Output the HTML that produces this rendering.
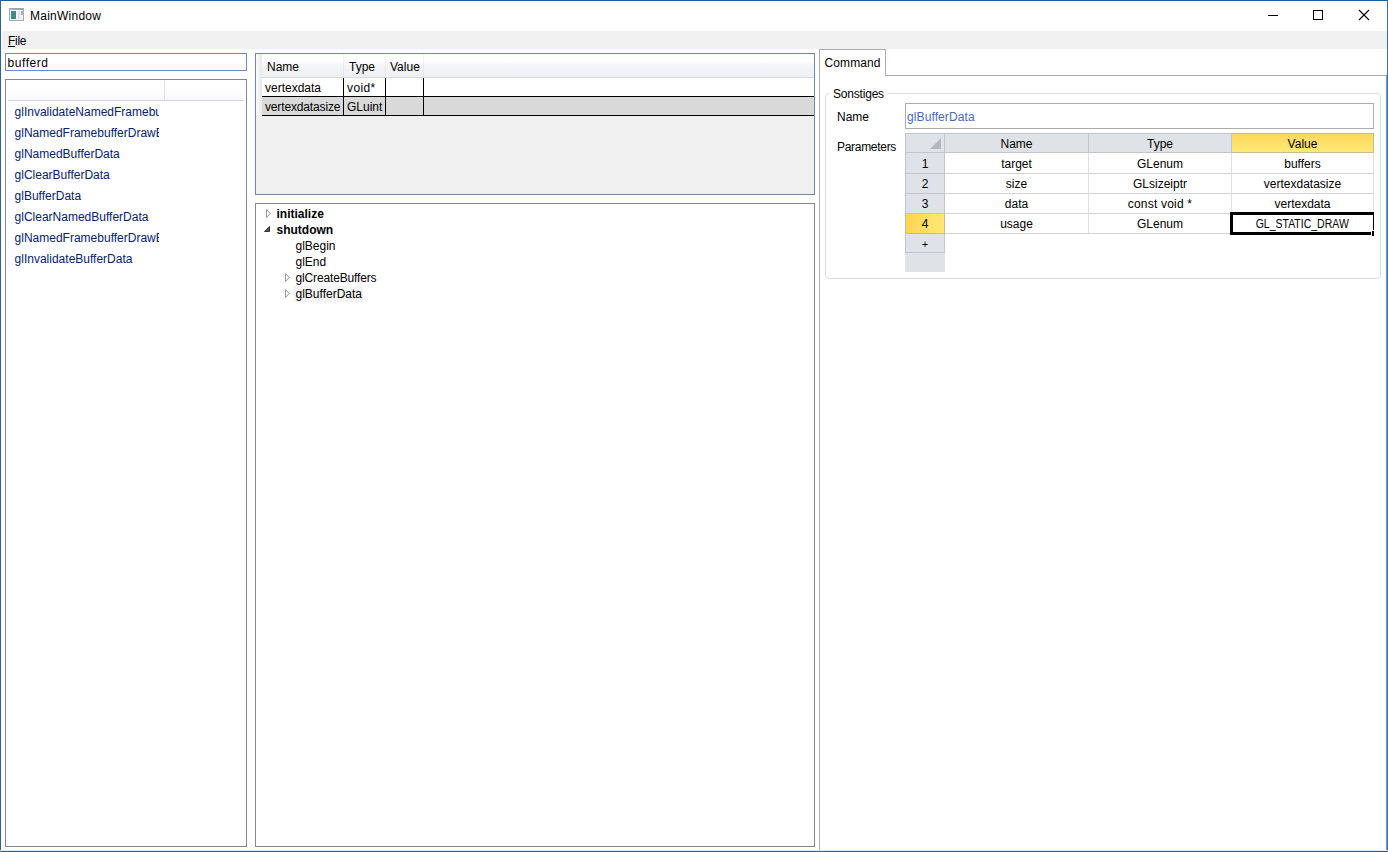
<!DOCTYPE html>
<html><head><meta charset="utf-8"><title>MainWindow</title>
<style>
*{box-sizing:border-box;margin:0;padding:0}
html,body{width:1388px;height:852px;overflow:hidden;background:#fff}
body{font-family:"Liberation Sans",sans-serif;font-size:12px;color:#000;position:relative}
.abs{position:absolute}
.t{position:absolute;white-space:nowrap;line-height:16px;height:16px}
#win{position:absolute;left:0;top:0;width:1388px;height:852px}
#menubar{left:2px;top:31px;width:1385px;height:18px;background:#f0f0f0}
/* left */
#search{left:5px;top:53px;width:242px;height:18px;border:1px solid #6a8cc4;background:#fff}
#list{left:5px;top:79px;width:242px;height:768px;border:1px solid #85878c;background:#fff}
#list .li{color:#042271;left:8.6px}
/* middle */
#dg{left:255px;top:53px;width:560px;height:142px;border:1px solid #7089a3;background:#f0f0f0}
#tree{left:255px;top:203px;width:560px;height:644px;border:1px solid #85878c;background:#fff}
/* right */
#tabc{left:819px;top:75px;width:568px;height:776px;border:1px solid #acacac;border-bottom:none;border-right:none;background:#fff}
#tab{left:819px;top:49px;width:67px;height:27px;border:1px solid #acacac;border-bottom:none;background:#fff}
#gb{left:825px;top:93px;width:556px;height:186px;border:1px solid #dcdcdc;border-radius:4px}
#nametb{left:905px;top:103px;width:469px;height:26px;border:1px solid #ababab;background:#fff}

#win{z-index:50;pointer-events:none}
#win i{position:absolute;display:block}
/* list header */
#lhead{background:linear-gradient(#fff 0,#fff 50%,#f7f8fa 100%);border-bottom:1px solid #d5d5d5}
/* datagrid */
#dg .hd{position:absolute;top:0;height:24px;background:linear-gradient(#fff 0,#fff 30%,#f4f5f7 50%,#eef0f3 100%);border-bottom:1px solid #d8dade}
#dg .vs{position:absolute;top:0;width:1px;height:23px;background:linear-gradient(#f4f5f7,#dfe2e6)}
#dg .row{position:absolute;left:6px;width:552px;height:19px;border-bottom:1px solid #000}
#dg .vl{position:absolute;top:24px;width:1px;height:38px;background:#000}
/* tree */
#tree .n{font-weight:bold}
/* grid right */
#pg{left:905px;top:133px;width:470px;height:140px}
#pg .h{position:absolute;top:0;height:20px;border:1px solid #c2c6cc;border-left:none;background:#dfe3e8;text-align:center;line-height:18px;padding-top:1px}
#pg .rh{position:absolute;left:0;width:40px;height:20px;border:1px solid #c2c6cc;border-top:none;background:#dfe3e8;text-align:center;line-height:19px;padding-top:1px}
#pg .c{position:absolute;height:20px;border-right:1px solid #e0e0e0;border-bottom:1px solid #d2d2d2;text-align:center;line-height:19px;padding-top:1px;background:#fff;white-space:nowrap}
</style></head><body>

<!-- window icon -->
<div class="abs" style="left:9px;top:8px;width:15px;height:13px;border:1px solid #a6acb4;border-top-color:#9ca6b3;background:#f3f4f6">
 <div class="abs" style="left:0;top:0;width:13px;height:1px;background:linear-gradient(90deg,#b4bcc6,#8c99aa)"></div>
 <div class="abs" style="left:1px;top:2px;width:5px;height:8px;background:linear-gradient(#4d7c9b,#3f8f8a 50%,#3c8a6c)"></div>
 <div class="abs" style="left:8px;top:2px;width:2px;height:8px;background:#dfe0e4"></div>
 <div class="abs" style="left:11px;top:2px;width:2px;height:4px;background:#aeb0b5"></div>
</div>
<!-- caption buttons -->
<svg class="abs" style="left:1260px;top:4px" width="120" height="24" viewBox="0 0 120 24">
 <rect x="8" y="11" width="10" height="1" fill="#000"/>
 <rect x="53.5" y="6.5" width="9" height="9" fill="none" stroke="#000" stroke-width="1"/>
 <path d="M99 6 L109 16 M109 6 L99 16" stroke="#000" stroke-width="1.1" fill="none"/>
</svg>
<!-- title bar -->
<div class="t" style="left:30px;top:8px;letter-spacing:.25px">MainWindow</div>
<div id="menubar" class="abs"></div>
<div class="t" style="left:8px;top:33px;letter-spacing:-.3px"><u>F</u>ile</div>

<!-- left column -->
<div id="search" class="abs"><div class="t" style="left:1.6px;top:1px;letter-spacing:.55px">bufferd</div></div>
<div id="list" class="abs">
 <div class="abs" id="lhead" style="left:2px;top:0;width:236px;height:21px"><div class="abs" style="left:156px;top:0;width:1px;height:20px;background:#e2e3e6"></div></div>
 <div class="abs" id="lclip" style="left:0;top:21px;width:153px;height:740px;overflow:hidden">
 <div class="t li" style="top:3px">glInvalidateNamedFramebufferData</div>
 <div class="t li" style="top:24px">glNamedFramebufferDrawBuffer</div>
 <div class="t li" style="top:45px">glNamedBufferData</div>
 <div class="t li" style="top:66px">glClearBufferData</div>
 <div class="t li" style="top:87px">glBufferData</div>
 <div class="t li" style="top:108px">glClearNamedBufferData</div>
 <div class="t li" style="top:129px">glNamedFramebufferDrawBuffers</div>
 <div class="t li" style="top:150px">glInvalidateBufferData</div>
 </div>
</div>

<!-- middle column -->
<div id="dg" class="abs">
 <div class="abs" style="left:0;top:0;width:6px;height:62px;background:linear-gradient(90deg,#fcfcfc,#e6e8eb)"></div>
 <div class="hd" style="left:6px;width:552px"></div>
 <div class="vs" style="left:87px"></div><div class="vs" style="left:129px"></div><div class="vs" style="left:167px"></div>
 <div class="t" style="left:11px;top:5px">Name</div>
 <div class="t" style="left:93px;top:5px">Type</div>
 <div class="t" style="left:134px;top:5px">Value</div>
 <div class="row" style="top:24px;background:#fff"></div>
 <div class="row" style="top:43px;background:#d9d9d9"></div>
 <div class="vl" style="left:87px"></div><div class="vl" style="left:129px"></div><div class="vl" style="left:167px"></div>
 <div class="t" style="left:9px;top:26px">vertexdata</div>
 <div class="t" style="left:91px;top:26px;letter-spacing:.4px">void*</div>
 <div class="t" style="left:9px;top:45px;letter-spacing:-.15px">vertexdatasize</div>
 <div class="t" style="left:91px;top:45px">GLuint</div>
</div>
<div id="tree" class="abs">
 <svg class="abs" style="left:8px;top:4px" width="40" height="100" viewBox="0 0 40 100">
  <path d="M2.5 1.5 L6.2 5.5 L2.5 9.5 Z" fill="#fff" stroke="#989898" stroke-width="1"/>
  <path d="M5.5 18.5 L5.5 23.5 L0.5 23.5 Z" fill="#595959" stroke="#333" stroke-width="1"/>
  <path d="M21.5 65.5 L25.2 69.5 L21.5 73.5 Z" fill="#fff" stroke="#989898" stroke-width="1"/>
  <path d="M21.5 81.5 L25.2 85.5 L21.5 89.5 Z" fill="#fff" stroke="#989898" stroke-width="1"/>
 </svg>
 <div class="t n" style="left:20.5px;top:2px">initialize</div>
 <div class="t n" style="left:20.5px;top:18px">shutdown</div>
 <div class="t" style="left:39.5px;top:34px">glBegin</div>
 <div class="t" style="left:39.5px;top:50px">glEnd</div>
 <div class="t" style="left:39.5px;top:66px;letter-spacing:-.15px">glCreateBuffers</div>
 <div class="abs" style="left:38px;top:82px;width:69px;height:16px;background:#f5f5f5"></div>
 <div class="t" style="left:39.5px;top:82px">glBufferData</div>
</div>

<!-- right column -->
<div id="tabc" class="abs"></div>
<div id="tab" class="abs"><div class="t" style="left:4.5px;top:5px;letter-spacing:.1px">Command</div></div>
<div id="gb" class="abs"></div>
<div class="abs" style="left:830px;top:88px;width:57px;height:12px;background:#fff"></div>
<div class="t" style="left:833px;top:86px;letter-spacing:-.2px">Sonstiges</div>
<div class="t" style="left:837px;top:109px">Name</div>
<div class="t" style="left:837px;top:139px;letter-spacing:-.3px">Parameters</div>
<div id="nametb" class="abs"><div class="t" style="left:1px;top:5px;color:#4a6ac8;letter-spacing:.1px">glBufferData</div></div>
<div id="pg" class="abs">
 <div class="abs" style="left:0;top:0;width:40px;height:139px;background:#dfe3e8"></div>
 <div class="h" style="left:0;width:40px;border-left:1px solid #c2c6cc"><svg class="abs" style="left:24px;top:4px" width="12" height="12"><path d="M11 0 L11 11 L0 11 Z" fill="#b3b7bd"/></svg></div>
 <div class="h" style="left:40px;width:144px">Name</div>
 <div class="h" style="left:184px;width:143px">Type</div>
 <div class="h" style="left:327px;width:142px;background:linear-gradient(#ffd75e,#fdea76);border-color:#c8bb90">Value</div>
 <div class="rh" style="top:20px;height:21px;line-height:20px;">1</div>
 <div class="c" style="left:40px;top:20px;width:144px;height:21px;line-height:20px">target</div>
 <div class="c" style="left:184px;top:20px;width:143px;height:21px;line-height:20px">GLenum</div>
 <div class="c" style="left:327px;top:20px;width:142px;height:21px;line-height:20px">buffers</div>
 <div class="rh" style="top:41px;height:20px;line-height:19px;">2</div>
 <div class="c" style="left:40px;top:41px;width:144px;height:20px;line-height:19px">size</div>
 <div class="c" style="left:184px;top:41px;width:143px;height:20px;line-height:19px">GLsizeiptr</div>
 <div class="c" style="left:327px;top:41px;width:142px;height:20px;line-height:19px">vertexdatasize</div>
 <div class="rh" style="top:61px;height:20px;line-height:19px;">3</div>
 <div class="c" style="left:40px;top:61px;width:144px;height:20px;line-height:19px">data</div>
 <div class="c" style="left:184px;top:61px;width:143px;height:20px;line-height:19px"><span style="letter-spacing:.2px">const void *</span></div>
 <div class="c" style="left:327px;top:61px;width:142px;height:20px;line-height:19px">vertexdata</div>
 <div class="rh" style="top:81px;height:20px;line-height:19px;background:linear-gradient(90deg,#ffd450,#ffe873);border-color:#c8bb90;">4</div>
 <div class="c" style="left:40px;top:81px;width:144px;height:20px;line-height:19px">usage</div>
 <div class="c" style="left:184px;top:81px;width:143px;height:20px;line-height:19px">GLenum</div>
 <div class="c" style="left:327px;top:81px;width:142px;height:20px;line-height:19px"><span style="display:inline-block;transform:scaleX(.875);transform-origin:50% 50%;margin:0 -10px">GL_STATIC_DRAW</span></div>
 <div class="rh" style="top:101px;height:19px;line-height:20px;font-size:11px;padding-top:0">+</div>
 <div class="abs" style="left:325px;top:79px;width:144px;height:23px;border:3px solid #000;border-right-width:1px"></div>
 <div class="abs" style="left:466px;top:97px;width:3px;height:6px;background:#fff"></div>
 <div class="abs" style="left:467px;top:98px;width:2px;height:5px;background:#000"></div>
</div>
<div id="win">
 <i style="left:0;top:0;width:1388px;height:1px;background:#1f5b95"></i>
 <i style="left:0;top:0;width:1px;height:852px;background:#2b6499"></i>
 <i style="left:1386px;top:75px;width:1px;height:777px;background:#6f9fce"></i>
 <i style="left:1387px;top:0;width:1px;height:852px;background:#3070ac"></i>
 <i style="left:0;top:850px;width:1388px;height:1px;background:#dcebf4"></i>
 <i style="left:0;top:851px;width:1388px;height:1px;background:#2f6190"></i>
</div>
</body></html>
